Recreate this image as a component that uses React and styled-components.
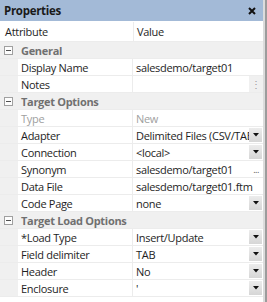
import React from 'react';
import styled, { createGlobalStyle } from 'styled-components';

const GlobalStyle = createGlobalStyle`
  html, body {
    margin: 0;
    padding: 0;
    background: #ffffff;
  }
  body {
    font-family: "Open Sans", "Noto Sans", sans-serif;
    font-size: 11px;
    letter-spacing: -0.3px;
    color: #1e1e1e;
  }
`;

const groups = [
  {
    title: 'General',
    rows: [
      { name: 'Display Name', value: 'salesdemo/target01' },
      { name: 'Notes', value: '', button: 'more' },
    ],
  },
  {
    title: 'Target Options',
    rows: [
      { name: 'Type', value: 'New', disabled: true },
      { name: 'Adapter', value: 'Delimited Files (CSV/TAB)', button: 'drop' },
      { name: 'Connection', value: '<local>', button: 'drop' },
      { name: 'Synonym', value: 'salesdemo/target01', button: 'dots' },
      { name: 'Data File', value: 'salesdemo/target01.ftm' },
      { name: 'Code Page', value: 'none', button: 'drop' },
    ],
  },
  {
    title: 'Target Load Options',
    rows: [
      { name: '*Load Type', value: 'Insert/Update', button: 'drop' },
      { name: 'Field delimiter', value: 'TAB', button: 'drop' },
      { name: 'Header', value: 'No', button: 'drop' },
      { name: 'Enclosure', value: "'", button: 'drop' },
    ],
  },
];

const CollapseIcon = () => (
  <svg width="9" height="9" viewBox="0 0 9 9">
    <rect x="0.5" y="0.5" width="8" height="8" fill="#fdfdfd" stroke="#a0a0a0" />
    <line x1="2" y1="4.5" x2="7" y2="4.5" stroke="#505050" />
  </svg>
);

const CloseIcon = () => (
  <svg width="8" height="8" viewBox="0 0 8 8">
    <path d="M1 1 L7 7 M7 1 L1 7" stroke="#111" strokeWidth="2" />
  </svg>
);

const Caret = () => (
  <svg width="6" height="4" viewBox="0 0 6 4">
    <path d="M0 0 H6 L3 3.5 Z" fill="#111" />
  </svg>
);

const RowButton = ({ kind }) => {
  if (kind === 'drop') return <DropButton><Caret /></DropButton>;
  if (kind === 'dots') return <DotsButton>...</DotsButton>;
  if (kind === 'more') return <MoreButton>⋮</MoreButton>;
  return null;
};

const App = () => {
  return (
    <>
      <GlobalStyle />
      <Frame>
        <Panel>
          <TitleBar>
            <Title>Properties</Title>
            <CloseIcon />
          </TitleBar>
          <Grid>
            <HeaderRow>
              <HeaderCell $first>Attribute</HeaderCell>
              <HeaderCell>Value</HeaderCell>
            </HeaderRow>
            {groups.map((g) => (
              <React.Fragment key={g.title}>
                <GroupRow>
                  <Gutter><CollapseIcon /></Gutter>
                  <GroupTitle>{g.title}</GroupTitle>
                </GroupRow>
                {g.rows.map((r) => (
                  <Row key={r.name}>
                    <Gutter />
                    <NameCell $disabled={r.disabled}>{r.name}</NameCell>
                    <ValueCell $disabled={r.disabled}>
                      <ValueText $short={r.button === 'more'}>{r.value}</ValueText>
                      <RowButton kind={r.button} />
                    </ValueCell>
                  </Row>
                ))}
              </React.Fragment>
            ))}
          </Grid>
        </Panel>
        <EdgeLight />
        <EdgeDark />
      </Frame>
    </>
  );
};

export default App;

const Frame = styled.div`
  display: flex;
  width: 267px;
  height: 302px;
  overflow: hidden;
`;
const Panel = styled.div`
  width: 263px;
  display: flex;
  flex-direction: column;
`;
const EdgeLight = styled.div`
  width: 2px;
  background: #dcdcdc;
`;
const EdgeDark = styled.div`
  width: 2px;
  background: #9c9c9c;
`;
const TitleBar = styled.div`
  height: 21px;
  background: #a3bad7;
  display: flex;
  align-items: center;
  justify-content: space-between;
  padding: 0 7px 0 4px;
  margin-bottom: 1px;
`;
const Title = styled.span`
  font-weight: bold;
  font-size: 11.5px;
  color: #1a1a1a;
`;
const Grid = styled.div`
  display: flex;
  flex-direction: column;
  gap: 1px;
  background: #ececec;
  padding-bottom: 1px;
`;
const HeaderRow = styled.div`
  display: grid;
  grid-template-columns: 133px 1fr;
  column-gap: 1px;
  height: 19px;
`;
const HeaderCell = styled.div`
  background: #ffffff;
  display: flex;
  align-items: center;
  padding-left: ${(p) => (p.$first ? '5px' : '3px')};
`;
const GroupRow = styled.div`
  display: flex;
  align-items: center;
  height: 16px;
  background: #f0f0f0;
`;
const Gutter = styled.div`
  width: 18px;
  display: flex;
  align-items: center;
  justify-content: center;
  padding-right: 1px;
  box-sizing: border-box;
  background: #f0f0f0;
`;
const GroupTitle = styled.span`
  font-weight: bold;
  color: #707070;
  padding-left: 3px;
`;
const Row = styled.div`
  display: grid;
  grid-template-columns: 18px 115px 1fr;
  height: 16px;
`;
const NameCell = styled.div`
  background: #ffffff;
  display: flex;
  align-items: center;
  padding-left: 3px;
  border-right: 1px solid #ececec;
  color: ${(p) => (p.$disabled ? '#a0a0a0' : '#1e1e1e')};
  white-space: nowrap;
  overflow: hidden;
`;
const ValueCell = styled.div`
  display: flex;
  align-items: center;
  background: #ffffff;
  color: ${(p) => (p.$disabled ? '#a0a0a0' : '#1e1e1e')};
  min-width: 0;
`;
const ValueText = styled.span`
  flex: 1;
  min-width: 0;
  padding-left: 3px;
  white-space: nowrap;
  overflow: hidden;
  align-self: stretch;
  display: flex;
  align-items: center;
  background: #ffffff;
  margin-right: ${(p) => (p.$short ? '1px' : '0')};
`;
const DropButton = styled.div`
  flex: none;
  width: 13px;
  height: 14px;
  margin-right: 1px;
  display: flex;
  align-items: center;
  justify-content: center;
  background: linear-gradient(#ececec, #d6d6d6);
`;
const DotsButton = styled.div`
  flex: none;
  width: 14px;
  text-align: center;
  font-size: 9px;
  color: #555;
  letter-spacing: -0.5px;
`;
const MoreButton = styled.div`
  flex: none;
  width: 14px;
  align-self: stretch;
  display: flex;
  align-items: center;
  justify-content: center;
  background: #f0f0f0;
  color: #9a9a9a;
  font-size: 10px;
`;
